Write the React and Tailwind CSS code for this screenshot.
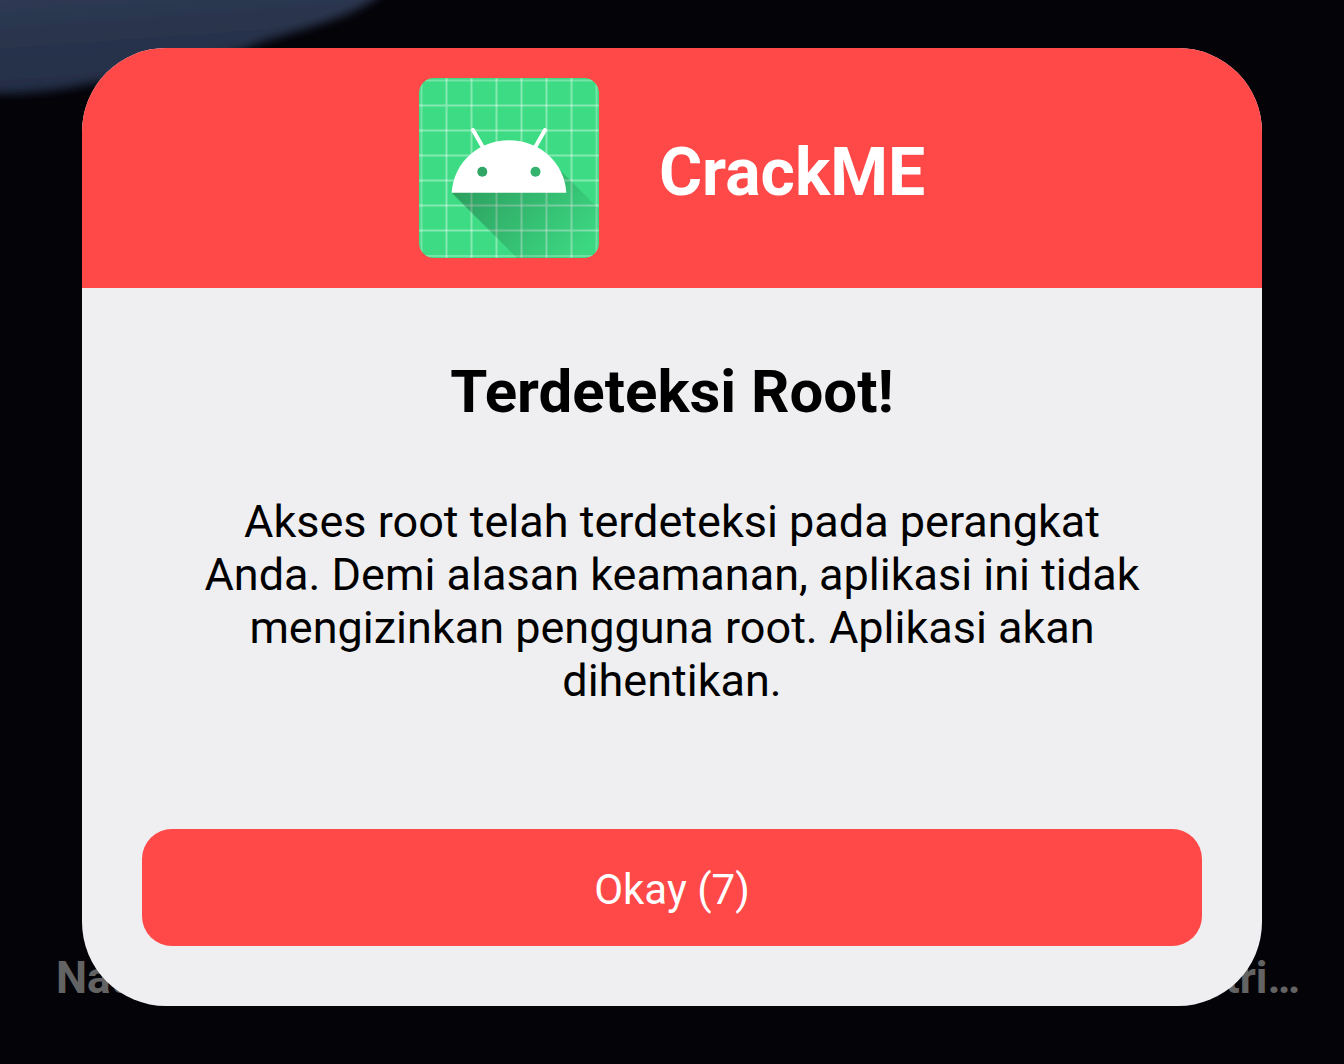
const gridLines = [27.5, 52.5, 77.5, 102.5, 127.5, 152.5];

function AppIcon() {
  return (
    <svg viewBox="0 0 180 180" className="size-[180px] shrink-0" role="img" aria-label="Android">
      <defs>
        <clipPath id="tile">
          <rect width="180" height="180" rx="15" />
        </clipPath>
        <linearGradient id="shade" gradientUnits="userSpaceOnUse" x1="60" y1="95" x2="151" y2="186">
          <stop offset="0" stopColor="#000" stopOpacity="0.27" />
          <stop offset="1" stopColor="#000" stopOpacity="0.02" />
        </linearGradient>
      </defs>
      <g clipPath="url(#tile)">
        <rect width="180" height="180" fill="#3ddc84" />
        <g stroke="#fff" strokeOpacity="0.38" strokeWidth="2">
          {gridLines.map((p) => (
            <path key={p} d={`M${p} 0V180M0 ${p}H180`} />
          ))}
          <path d="M2.5 0V180M0 2.5H180M177.5 0V180M0 178H180" strokeOpacity="0.28" />
        </g>
        <path d="M32.7 114.7L98 180H180V131L137 88Z" fill="url(#shade)" />
        <path d="M32.7 114.7C34.5 84.5 59.5 62.3 90 62.3S145.500 84.5 147.300 114.7Z" fill="#fff" />
        <path d="M54 52L64 69.5M126 52L116 69.5" stroke="#fff" strokeWidth="4" strokeLinecap="round" />
        <circle cx="63.3" cy="93.7" r="5" fill="#30a666" />
        <circle cx="116.5" cy="93.7" r="5" fill="#33b36e" />
      </g>
    </svg>
  );
}

export default function App() {
  return (
    <div className="relative grid min-h-screen overflow-hidden bg-[#040308] font-['Roboto',sans-serif]">
      <svg className="absolute top-0 left-0 h-[140px] w-[460px]" viewBox="0 0 460 140" aria-hidden="true">
        <defs>
          <linearGradient id="glow" x1="0" y1="0" x2="0.25" y2="1">
            <stop offset="0" stopColor="#323f58" />
            <stop offset="1" stopColor="#232d45" />
          </linearGradient>
          <filter id="soft" x="-20%" y="-20%" width="140%" height="140%">
            <feGaussianBlur stdDeviation="5" />
          </filter>
        </defs>
        <path d="M-40 -40V92Q30 98 94 83C160 76 220 60 262 42C310 26 345 20 376 -2L420 -40Z" fill="url(#glow)" filter="url(#soft)" />
      </svg>

      <div className="col-start-1 row-start-1 flex items-end justify-between pr-[44px] pb-[59px] pl-[56px] text-[44px] leading-[53px] font-bold text-[#636363]" aria-hidden="true">
        <span>Nat</span>
        <span>stri…</span>
      </div>

      <main className="relative col-start-1 row-start-1 px-[82px] pt-12 pb-[58px]">
        <section role="dialog" aria-labelledby="dialog-title" aria-describedby="dialog-text" className="overflow-hidden rounded-[84px] bg-[#efeff1]">
          <header className="flex items-center justify-center gap-[60px] bg-[#ff4848] py-[30px]">
            <AppIcon />
            <p className="pt-[10px] text-[66px] leading-[78px] font-bold text-white">CrackME</p>
          </header>
          <div className="flex flex-col items-center px-[60px] pt-[69px] pb-[60px] text-center text-black">
            <h1 id="dialog-title" className="text-[60px] leading-[70px] font-bold">Terdeteksi Root!</h1>
            <p id="dialog-text" className="mt-[68px] max-w-[940px] text-[45px] leading-[53px]">
              Akses root telah terdeteksi pada perangkat Anda. Demi alasan keamanan, aplikasi ini tidak mengizinkan pengguna root. Aplikasi akan dihentikan.
            </p>
            <button type="button" className="mt-[122px] h-[117px] w-full rounded-[30px] bg-[#ff4848] pt-1 text-[42px] leading-[50px] text-white">
              Okay (7)
            </button>
          </div>
        </section>
      </main>
    </div>
  );
}
